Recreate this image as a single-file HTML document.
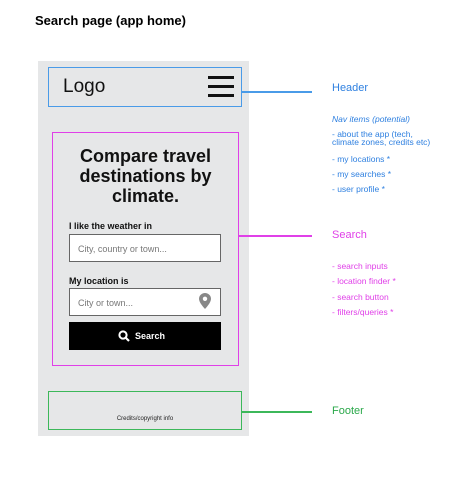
<!DOCTYPE html>
<html><head><style>
body{margin:0;width:466px;height:477px;background:#fff;position:relative;font-family:"Liberation Sans",sans-serif;overflow:hidden}
.a{position:absolute;white-space:nowrap}
.panel{position:absolute;left:38px;top:61px;width:211px;height:375px;background:#e6e7e8}
.box{position:absolute;box-sizing:border-box}
.inp{position:absolute;left:69px;width:152px;height:28px;background:#fff;border:1px solid #666;box-sizing:border-box;font-size:9px;color:#777;padding:9px 0 0 8px}
.lbl{font-size:9px;font-weight:bold;color:#111}
.blue{color:#2f80e0;font-size:8.5px}
.mag{color:#e040e8;font-size:8.5px}
.line{position:absolute;height:1.5px}
</style></head><body>
<div class="a" style="left:35px;top:13px;font-size:13px;font-weight:bold">Search page (app home)</div>
<div class="panel"></div>
<div class="box" style="left:48px;top:67px;width:194px;height:40px;border:1.5px solid #4a9be8"></div>
<div class="a" style="left:63px;top:76px;font-size:19px;color:#111">Logo</div>
<div class="box" style="left:208px;top:76px;width:26px;height:3px;background:#111"></div>
<div class="box" style="left:208px;top:85px;width:26px;height:3px;background:#111"></div>
<div class="box" style="left:208px;top:94px;width:26px;height:3px;background:#111"></div>
<div class="box" style="left:52px;top:132px;width:187px;height:234px;border:1.5px solid #e040e8"></div>
<div class="a" style="left:52px;width:187px;top:146px;text-align:center;font-size:18px;font-weight:bold;line-height:20px;color:#111">Compare travel<br>destinations by<br>climate.</div>
<div class="a lbl" style="left:69px;top:221px">I like the weather in</div>
<div class="inp" style="top:234px">City, country or town...</div>
<div class="a lbl" style="left:69px;top:276px">My location is</div>
<div class="inp" style="top:288px">City or town...</div>
<svg class="a" style="left:199px;top:293px" width="12" height="16" viewBox="0 0 12 16"><path d="M6 0C2.7 0 0 2.6 0 5.8 0 10 6 16 6 16s6-6 6-10.2C12 2.6 9.3 0 6 0z" fill="#888"/><circle cx="6" cy="5.8" r="2.2" fill="#fff"/></svg>
<div class="box" style="left:69px;top:322px;width:152px;height:28px;background:#000"></div>
<svg class="a" style="left:118px;top:330px" width="12" height="12" viewBox="0 0 12 12"><circle cx="5" cy="5" r="3.6" stroke="#fff" stroke-width="2" fill="none"/><path d="M7.6 7.6L11 11" stroke="#fff" stroke-width="2.2"/></svg>
<div class="a" style="left:135px;top:331px;font-size:9px;font-weight:bold;color:#fff">Search</div>
<div class="box" style="left:48px;top:391px;width:194px;height:39px;border:1.5px solid #3cb85a"></div>
<div class="a" style="left:48px;width:194px;top:416px;text-align:center;font-size:6px;color:#222">Credits/copyright info</div>
<div class="line" style="left:242px;top:91px;width:70px;background:#4a9be8"></div>
<div class="line" style="left:239px;top:235px;width:73px;background:#e040e8"></div>
<div class="line" style="left:242px;top:411px;width:70px;background:#3cb85a"></div>
<div class="a" style="left:332px;top:82px;font-size:11px;color:#2f80e0">Header</div>
<div class="a blue" style="left:332px;top:114px;font-style:italic">Nav items (potential)</div>
<div class="a blue" style="left:332px;top:130px;line-height:8px">- about the app (tech,<br>climate zones, credits etc)</div>
<div class="a blue" style="left:332px;top:154px">- my locations *</div>
<div class="a blue" style="left:332px;top:169px">- my searches *</div>
<div class="a blue" style="left:332px;top:184px">- user profile *</div>
<div class="a" style="left:332px;top:229px;font-size:11px;color:#e040e8">Search</div>
<div class="a mag" style="left:332px;top:261px">- search inputs</div>
<div class="a mag" style="left:332px;top:276px">- location finder *</div>
<div class="a mag" style="left:332px;top:292px">- search button</div>
<div class="a mag" style="left:332px;top:307px">- filters/queries *</div>
<div class="a" style="left:332px;top:405px;font-size:11px;color:#2aa84a">Footer</div>
</body></html>
